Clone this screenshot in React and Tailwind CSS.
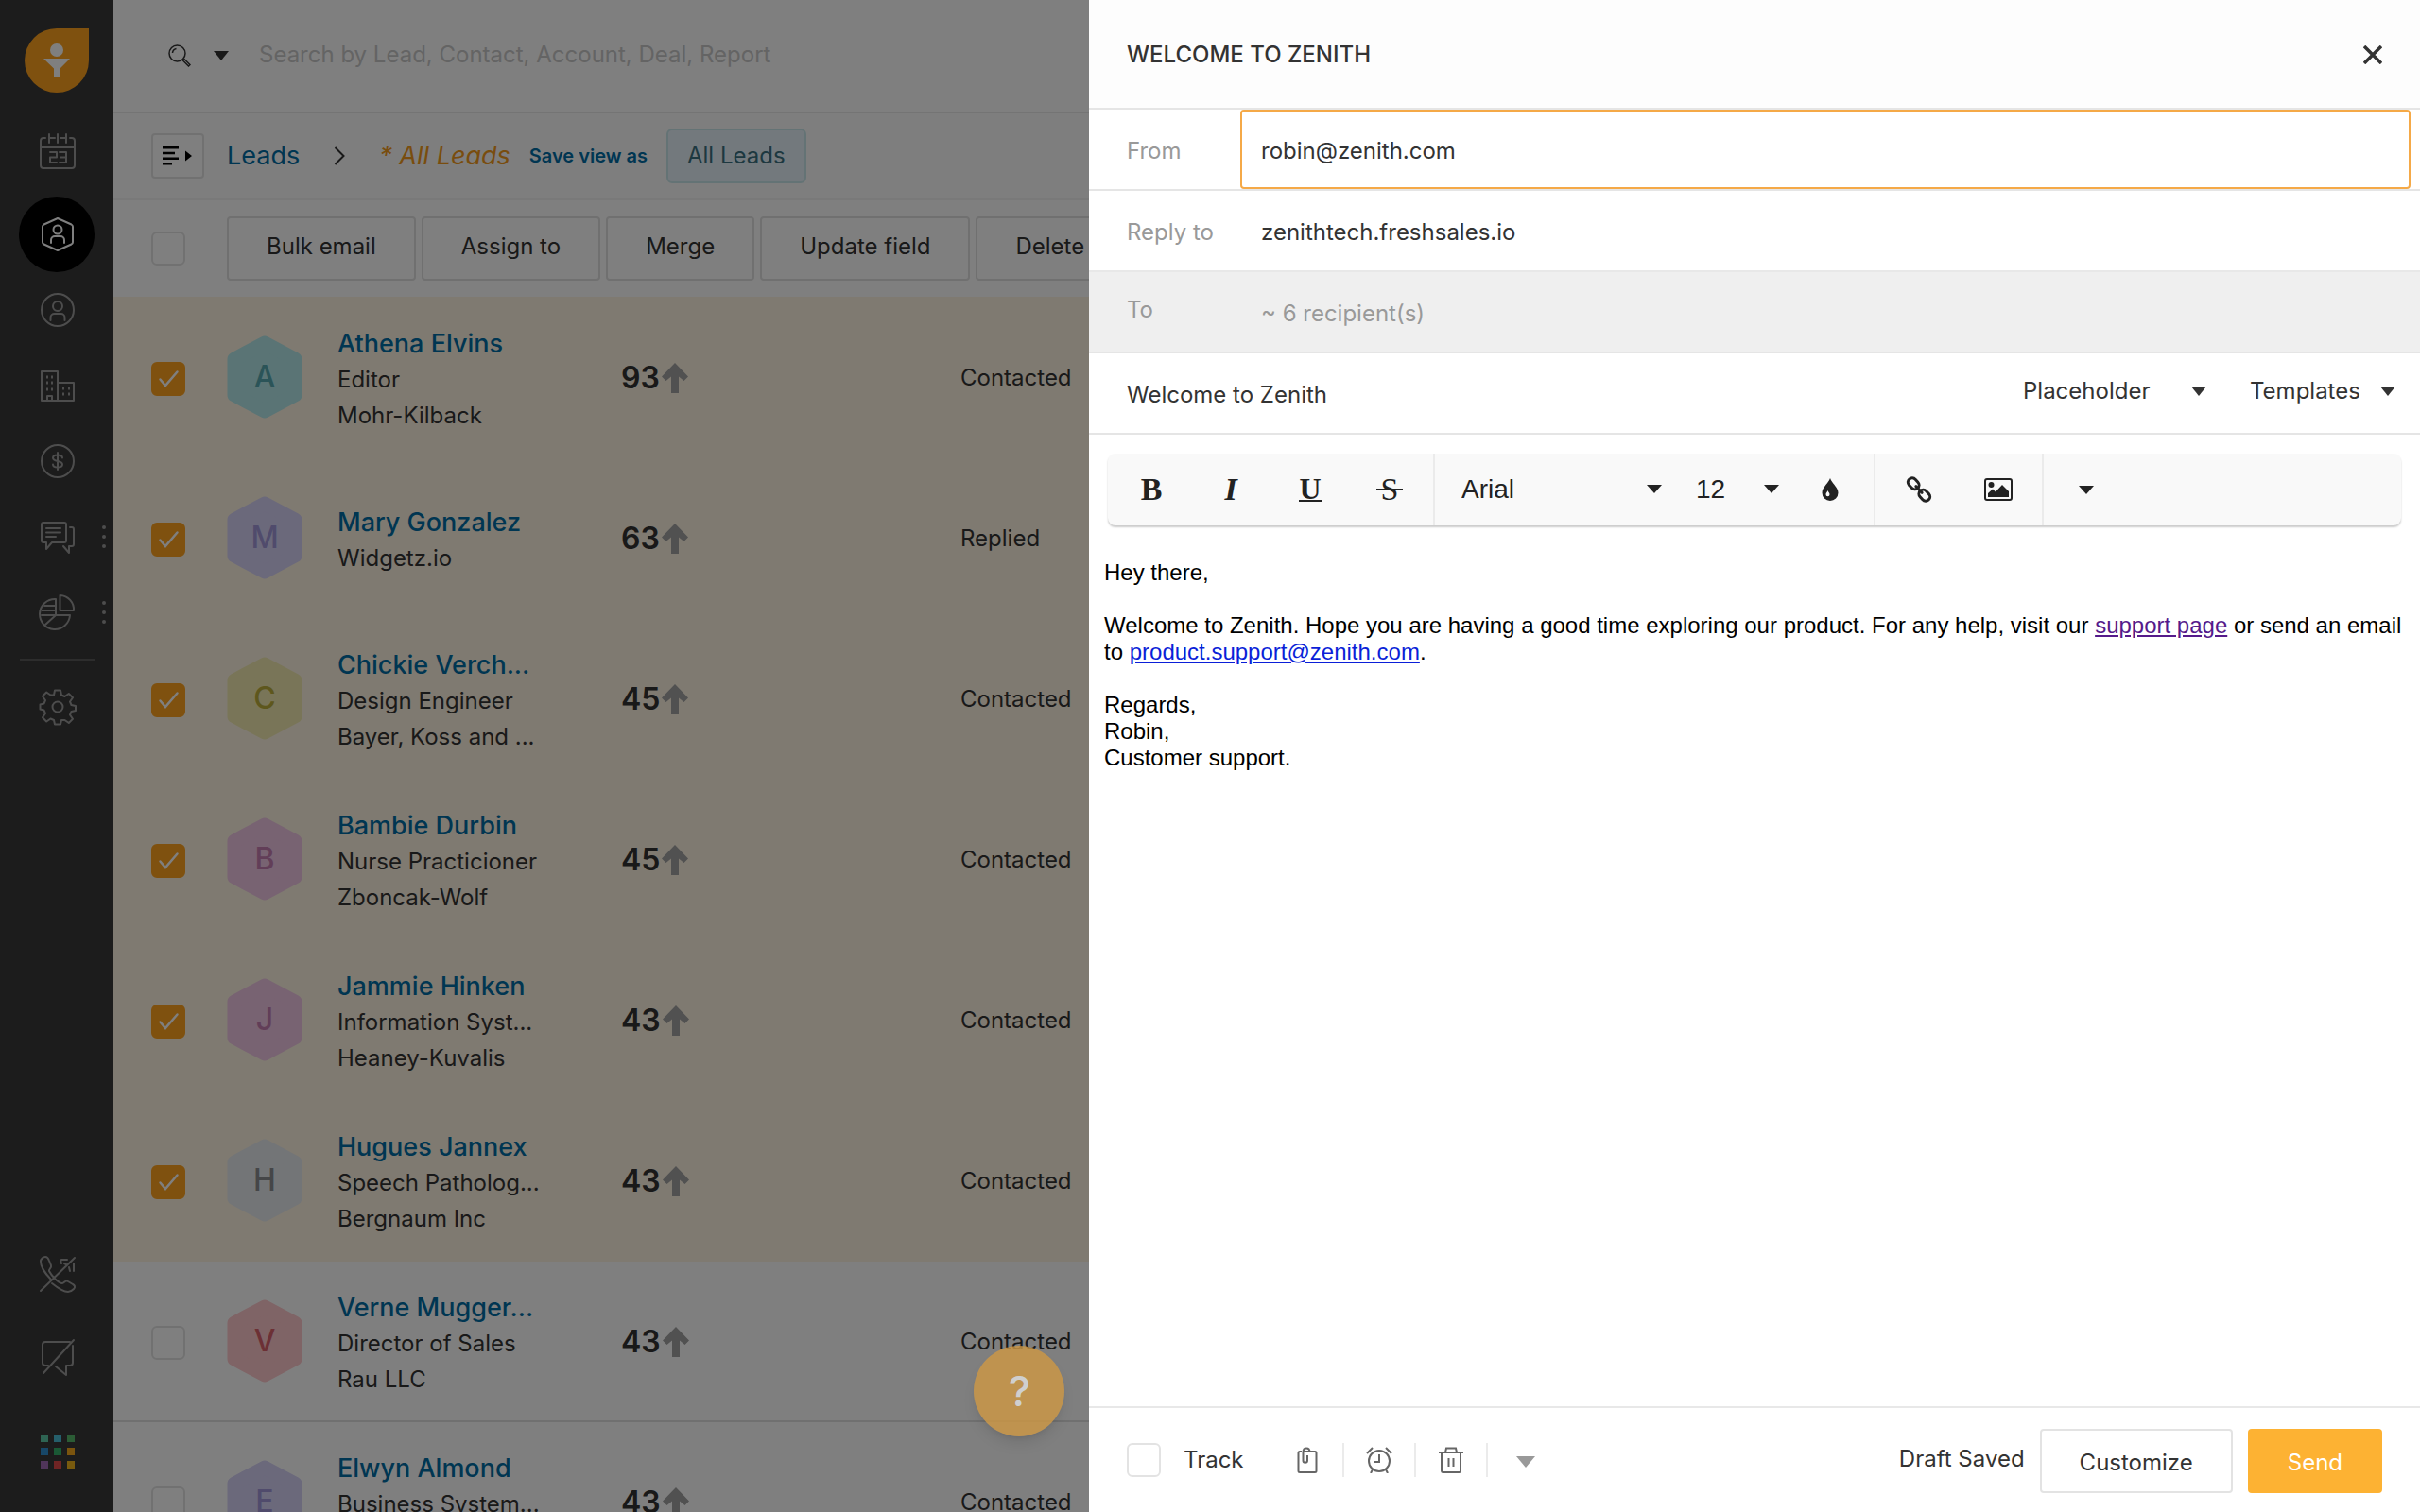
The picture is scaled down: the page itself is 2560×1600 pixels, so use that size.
import { useState } from "react";
import clsx from "clsx";

const leads = [
  { name: "Athena Elvins", title: "Editor", company: "Mohr-Kilback", score: 93, status: "Contacted", fill: "#b4e8ea", ink: "#56a8b0", selected: true },
  { name: "Mary Gonzalez", title: "", company: "Widgetz.io", score: 63, status: "Replied", fill: "#d6d2f6", ink: "#a096d8", selected: true },
  { name: "Chickie Verch...", title: "Design Engineer", company: "Bayer, Koss and ...", score: 45, status: "Contacted", fill: "#f2ebb0", ink: "#bcae3a", selected: true },
  { name: "Bambie Durbin", title: "Nurse Practicioner", company: "Zboncak-Wolf", score: 45, status: "Contacted", fill: "#f0c6e4", ink: "#c47cb0", selected: true },
  { name: "Jammie Hinken", title: "Information Syst...", company: "Heaney-Kuvalis", score: 43, status: "Contacted", fill: "#f0c6e4", ink: "#c47cb0", selected: true },
  { name: "Hugues Jannex", title: "Speech Patholog...", company: "Bergnaum Inc", score: 43, status: "Contacted", fill: "#e6eaee", ink: "#8a8d90", selected: true },
  { name: "Verne Mugger...", title: "Director of Sales", company: "Rau LLC", score: 43, status: "Contacted", fill: "#ffc8cc", ink: "#d8606a", selected: false },
  { name: "Elwyn Almond", title: "Business System...", company: "", score: 43, status: "Contacted", fill: "#d6d2f6", ink: "#a096d8", selected: false },
];

const bulkActions = ["Bulk email", "Assign to", "Merge", "Update field", "Delete"];

const appColors = [
  "bg-[#5cc9a7]", "bg-[#4bbfd6]", "bg-[#57b96b]",
  "bg-[#2f8fd0]", "bg-[#35b36a]", "bg-[#f5a81c]",
  "bg-[#a06ab4]", "bg-[#e04848]", "bg-[#f0b41c]",
];

function Caret({ className }) {
  return (
    <svg viewBox="0 0 16 10" className={clsx("pointer-events-none", className)} fill="currentColor" preserveAspectRatio="none" aria-hidden="true">
      <path d="M0 0h16L8 10z" />
    </svg>
  );
}

function Line({ children, className = "size-10" }) {
  return (
    <svg viewBox="0 0 40 40" className={className} fill="none" stroke="currentColor" strokeWidth="2" strokeLinejoin="round" strokeLinecap="round" aria-hidden="true">
      {children}
    </svg>
  );
}

function NavItem({ label, active, more, children }) {
  return (
    <div className="relative flex h-20 w-full items-center justify-center">
      <button
        aria-label={label}
        className={clsx(
          "flex size-20 items-center justify-center rounded-full pl-0.5",
          active ? "bg-black text-white" : "text-[#9a9a9a]"
        )}
      >
        {children}
      </button>
      {more && (
        <span className="absolute right-2 flex flex-col gap-1.5 text-[#9a9a9a]">
          <i className="size-1 rounded-full bg-current" />
          <i className="size-1 rounded-full bg-current" />
          <i className="size-1 rounded-full bg-current" />
        </span>
      )}
    </div>
  );
}

function Sidebar() {
  return (
    <nav className="flex w-[120px] shrink-0 flex-col items-center bg-[#383838] pt-[30px] pb-6">
      <a href="#home" aria-label="Home" className="mb-[22px] flex size-[68px] items-center justify-center rounded-full rounded-tr-lg bg-[#ffa21e]">
        <svg viewBox="0 0 28 36" className="h-9 w-7" fill="#fff" aria-hidden="true">
          <circle cx="14" cy="7" r="7" />
          <path d="M0 16h28L17.500 26.500V36h-6.500V26.500z" />
        </svg>
      </a>
      <NavItem label="Calendar">
        <Line>
          <path d="M7 6H5a3 3 0 0 0-3 3v26a3 3 0 0 0 3 3h30a3 3 0 0 0 3-3V9a3 3 0 0 0-3-3h-2M15 6h2M23 6h2M2 16h36M11 2v9M20 2v9M29 2v9M12 6h3M25 6h3" />
          <path d="M12 21h7v5.500h-7V32h7M22 21h7v11h-7M23 26.500h6" />
        </Line>
      </NavItem>
      <div className="h-2" />
      <NavItem label="Leads" active>
        <Line>
          <path d="M20 3 34.500 9.500a3 3 0 0 1 1.500 3v15a3 3 0 0 1-1.500 3L20 37 5.500 30.500a3 3 0 0 1-1.500-3v-15a3 3 0 0 1 1.500-3z" />
          <circle cx="20" cy="15" r="4.500" />
          <path d="M13 29v-3a4 4 0 0 1 4-4h6a4 4 0 0 1 4 4v3" />
        </Line>
      </NavItem>
      <NavItem label="Contacts">
        <Line>
          <circle cx="20" cy="20" r="17" />
          <circle cx="20" cy="16" r="5" />
          <path d="M12.500 31v-3a4 4 0 0 1 4-4h7a4 4 0 0 1 4 4v3" />
        </Line>
      </NavItem>
      <NavItem label="Accounts">
        <Line>
          <path d="M3 36V5h17v31M20 17h17v19H3M9 36v-5h5v5" />
          <path d="M8 11h2M13 11h2M8 17h2M13 17h2M8 24h2M13 24h2M25 23h2M31 23h2M25 29h2M31 29h2" strokeWidth="3" strokeLinecap="butt" />
        </Line>
      </NavItem>
      <NavItem label="Deals">
        <Line>
          <circle cx="20" cy="20" r="17" />
          <path d="M25 16.500c0-2-2.200-3-5-3s-5 1-5 3 2.200 3 5 3.500 5 1.500 5 3.500-2.200 3-5 3-5-1-5-3M20 11v18" />
        </Line>
      </NavItem>
      <NavItem label="Conversations" more>
        <Line>
          <path d="M5 5h22a2 2 0 0 1 2 2v17a2 2 0 0 1-2 2H14l-6 7v-7H5a2 2 0 0 1-2-2V7a2 2 0 0 1 2-2z" />
          <path d="M33 10h2a2 2 0 0 1 2 2v16a2 2 0 0 1-2 2h-3v7l-6-7M8 11h15M8 15.500h15M8 20h10" />
        </Line>
      </NavItem>
      <NavItem label="Reports" more>
        <Line>
          <path d="M18 6a16 16 0 1 0 15 17H18z" />
          <path d="M22.500 2v16H37A15 15 0 0 0 22.500 2zM6 13h12M3.500 18H18M3 23h15M18 23 7 33" />
        </Line>
      </NavItem>
      <div className="my-[9px] ml-0.5 h-0.5 w-20 shrink-0 bg-[#5a5a5a]" />
      <NavItem label="Settings">
        <Line>
          <circle cx="20" cy="20" r="5.500" />
          <path d="M17 2.500h6l1 5 3.500 1.500 4.300-3 4.200 4.200-3 4.300 1.500 3.500 4.500 1v5l-4.500 1-1.500 3.500 3 4.300-4.200 4.200-4.300-3L24 34l-1 4.500h-6L16 34l-3.500-1.500-4.300 3L4 31.300 7 27l-1.500-3.500-4-1v-5l4-1L7 13 4 8.700l4.200-4.200 4.300 3L16 7.500z" />
        </Line>
      </NavItem>
      <div className="grow" />
      <NavItem label="Phone off">
        <Line>
          <path d="M13 26C7 20 2 12 2 7c0-3 3-5 5-5s3 1 4 4l2 5c1 3-3 4-2 6s3 5 6 8 6 5 8 5 3-4 6-2l5 3c2 1 3 3 1 5s-4 3-6 3c-5 0-12-5-17-9M2 38 38 3" />
          <path d="M24 9c-1-2-1-3 0-4h6M33 17l-1-4M37 17V9M29 10l-2-1" />
        </Line>
      </NavItem>
      <div className="h-2" />
      <NavItem label="Chat off">
        <Line>
          <path d="M33 4H7a3 3 0 0 0-3 3v19a3 3 0 0 0 3 3h3M36 8v18a3 3 0 0 1-3 3h-4v10l-11-9M37 2 5 37" />
        </Line>
      </NavItem>
      <div className="h-5" />
      <NavItem label="Switch app">
        <span className="grid grid-cols-3 gap-1.5">
          {appColors.map((c) => (
            <i key={c} className={clsx("size-2", c)} />
          ))}
        </span>
      </NavItem>
    </nav>
  );
}

function Checkbox(props) {
  return (
    <span className="grid size-9 shrink-0">
      <input
        type="checkbox"
        className="peer col-start-1 row-start-1 size-9 appearance-none rounded-md border-2 border-[#e3e3e3] bg-white checked:border-[#ffa21e] checked:bg-[#ffa21e]"
        {...props}
      />
      <svg viewBox="0 0 36 36" className="pointer-events-none col-start-1 row-start-1 hidden size-9 peer-checked:block" fill="none" stroke="#fff" strokeWidth="2.500" strokeLinecap="round" aria-hidden="true">
        <path d="M9.500 18.500 15 25 27.500 10.500" />
      </svg>
    </span>
  );
}

function Avatar({ letter, fill, ink }) {
  return (
    <span className="grid h-[88px] w-20 place-items-center">
      <svg viewBox="0 0 80 88" className="col-start-1 row-start-1 h-[88px] w-20" aria-hidden="true">
        <path d="M40 8 72 25v38L40 80 8 63V25z" fill={fill} stroke={fill} strokeWidth="15" strokeLinejoin="round" />
      </svg>
      <span className="col-start-1 row-start-1 text-[32px] font-medium" style={{ color: ink }}>
        {letter}
      </span>
    </span>
  );
}

function LeadsPage() {
  const [picked, setPicked] = useState(leads.map((l) => l.selected));
  const toggle = (i) => setPicked(picked.map((p, n) => (n === i ? !p : p)));

  return (
    <main className="flex min-w-0 flex-1 flex-col bg-white text-[#333]">
      <header className="flex h-[120px] shrink-0 items-center border-b-2 border-[#e8e8e8] pl-[58px]">
        <button aria-label="Search in" className="flex items-center gap-6">
          <svg viewBox="0 0 24 24" className="size-6" fill="none" stroke="currentColor" strokeWidth="1.500" aria-hidden="true">
            <circle cx="9.500" cy="9.500" r="8.500" />
            <path d="M4.500 9a5 5 0 0 1 4-4.500M15.500 17l1.500-1.500 6 6-1.500 1.500z" />
          </svg>
          <Caret className="h-2.5 w-4" />
        </button>
        <input
          type="search"
          aria-label="Search"
          placeholder="Search by Lead, Contact, Account, Deal, Report"
          className="ml-8 w-[600px] bg-transparent pb-0.5 text-2xl placeholder:text-[#c8c8c8] focus:outline-none"
        />
      </header>

      <div className="flex h-[92px] shrink-0 items-center border-b-2 border-[#f2f2f2] bg-[#fdfdfd] pl-10">
        <button aria-label="Show views" className="flex h-12 w-14 items-center justify-center rounded-sm border-2 border-[#e3e3e3] bg-white text-black">
          <svg viewBox="0 0 32 20" className="h-5 w-8" fill="currentColor" aria-hidden="true">
            <path d="M0 0h17v2.500H0zM0 5.700h13v2.500H0zM0 11.400h17v2.500H0zM0 17.100h10v2.500H0zM24 4.500 31 10l-7 5.500z" />
          </svg>
        </button>
        <a href="#leads" className="ml-6 text-[27px] text-[#006ca4]">Leads</a>
        <svg viewBox="0 0 12 20" className="ml-9 h-5 w-3" fill="none" stroke="currentColor" strokeWidth="2" aria-hidden="true">
          <path d="m1.500 1 9 9-9 9" />
        </svg>
        <span className="ml-9 text-[27px] text-[#f29a1c] italic">* All Leads</span>
        <button className="ml-5 text-xl font-semibold text-[#006ca4]">Save view as</button>
        <button className="ml-5 h-[58px] rounded-md border-2 border-[#c9e6ea] bg-[#e7f3fb] px-5 text-2xl text-[#3a7080]">All Leads</button>
      </div>

      <div className="flex h-[102px] shrink-0 items-center pl-10">
        <Checkbox aria-label="Select all" />
        <div className="ml-11 flex gap-1.5">
          {bulkActions.map((a) => (
            <button key={a} className="h-[68px] rounded-sm border-2 border-[#e0e0e0] bg-white px-10 pb-1 text-2xl whitespace-nowrap">
              {a}
            </button>
          ))}
        </div>
      </div>

      <table className="w-full table-fixed">
        <colgroup>
          <col className="w-[120px]" />
          <col className="w-[117px]" />
          <col className="w-[300px]" />
          <col className="w-[359px]" />
          <col />
        </colgroup>
        <tbody>
          {leads.map((l, i) => (
            <tr key={l.name} className={clsx("h-[170px] border-b-2", picked[i] ? "border-[#fef4e2] bg-[#fef4e2]" : "border-[#e0e0e0] bg-white")}>
              <td className="pt-1 pl-10">
                <Checkbox aria-label={`Select ${l.name}`} checked={picked[i]} onChange={() => toggle(i)} />
              </td>
              <td>
                <Avatar letter={l.name[0]} fill={l.fill} ink={l.ink} />
              </td>
              <td className="pt-1.5 text-2xl leading-[38px] whitespace-nowrap">
                <a href="#lead" className="block text-[27px] leading-[38px] font-medium text-[#006ca4]">{l.name}</a>
                {l.title && <div>{l.title}</div>}
                <div className="h-[38px]">{l.company}</div>
              </td>
              <td className="pt-0.5">
                <span className="flex items-center gap-0.5 text-[32px] font-semibold">
                  {l.score}
                  <svg viewBox="0 0 28 32" className="h-8 w-7" fill="#a2a2a2" aria-hidden="true">
                    <path d="M14 0 28 14.500l-4.500 4.500-5.500-4.500V32h-8V14.500L4.500 19 0 14.500z" />
                  </svg>
                </span>
              </td>
              <td className="pt-0.5 text-2xl">{l.status}</td>
            </tr>
          ))}
        </tbody>
      </table>
    </main>
  );
}

function Picker({ label, value, options, className, caret }) {
  return (
    <span className={clsx("grid items-center", className)}>
      <select aria-label={label} defaultValue={value} className="col-start-1 row-start-1 w-full appearance-none bg-transparent focus:outline-none">
        {options.map((o) => (
          <option key={o}>{o}</option>
        ))}
      </select>
      <Caret className={clsx("col-start-1 row-start-1 justify-self-end", caret)} />
    </span>
  );
}

function ToolButton({ label, children }) {
  return (
    <button aria-label={label} className="flex w-[84px] items-center justify-center font-['Liberation_Serif',serif] text-[34px] leading-9">
      {children}
    </button>
  );
}

function EditorToolbar() {
  return (
    <div className="mx-5 mt-5 flex h-[76px] shrink-0 rounded-lg bg-[#f9f9f9] text-[#222] shadow-[0_2px_2px_#ccc]">
      <div className="flex border-r-2 border-[#ebebeb] px-1">
        <ToolButton label="Bold"><b>B</b></ToolButton>
        <ToolButton label="Italic"><b className="italic">I</b></ToolButton>
        <ToolButton label="Underline"><span className="border-b-2 border-current text-[32px] leading-6 font-bold">U</span></ToolButton>
        <ToolButton label="Strikethrough">
          <span className="grid items-center justify-items-center">
            <span className="col-start-1 row-start-1">S</span>
            <i className="col-start-1 row-start-1 h-0.5 w-7 bg-current" />
          </span>
        </ToolButton>
      </div>
      <div className="flex items-center border-r-2 border-[#ebebeb] pl-7 font-['Liberation_Sans',sans-serif] text-[28px]">
        <Picker label="Font" value="Arial" options={["Arial", "Georgia", "Verdana"]} className="w-[212px]" caret="h-[9px] w-4" />
        <Picker label="Font size" value="12" options={["10", "12", "14"]} className="ml-9 w-[88px]" caret="h-[9px] w-4" />
        <button aria-label="Text color" className="flex w-[100px] justify-center pl-2">
          <svg viewBox="0 0 18 24" className="h-6 w-[18px]" fill="currentColor" fillRule="evenodd" aria-hidden="true">
            <path d="M9 0c1.500 5 8.500 9.500 8.500 15.500a8.500 8.500 0 0 1-17 0C.5 9.500 7.500 5 9 0zM6.500 13c-.7 1.700-2 2.600-2 4.200a2 2 0 0 0 4 0c0-1.600-1.400-2.500-2-4.200z" />
          </svg>
        </button>
      </div>
      <div className="flex border-r-2 border-[#ebebeb] px-1">
        <ToolButton label="Insert link">
          <svg viewBox="0 0 28 28" className="size-7" fill="none" stroke="currentColor" strokeWidth="3" aria-hidden="true">
            <g transform="rotate(47 14 14)">
              <rect x="-1" y="9.500" width="13" height="9" rx="4.500" />
              <rect x="16" y="9.500" width="13" height="9" rx="4.500" />
              <path d="M9.500 14h9" strokeLinecap="round" />
            </g>
          </svg>
        </ToolButton>
        <ToolButton label="Insert image">
          <svg viewBox="0 0 30 24" className="h-6 w-[30px]" fill="currentColor" aria-hidden="true">
            <rect x="1" y="1" width="28" height="22" rx="2" fill="none" stroke="currentColor" strokeWidth="2" />
            <circle cx="7.500" cy="7" r="3" />
            <path d="M4 20v-4l5-4.500 3 3L19 7l7 7v6z" />
          </svg>
        </ToolButton>
      </div>
      <button aria-label="More formatting" className="px-[37px]">
        <Caret className="h-[9px] w-4" />
      </button>
    </div>
  );
}

function EmailPanel() {
  return (
    <section aria-label="Compose email" className="absolute inset-y-0 right-0 flex w-[55%] flex-col bg-white text-2xl text-[#333]">
      <header className="flex h-[116px] shrink-0 items-center justify-between border-b-2 border-[#e5e5e5] bg-[#fdfdfd] px-10 pt-0.5">
        <h1 className="font-medium">WELCOME TO ZENITH</h1>
        <button aria-label="Close">
          <svg viewBox="0 0 20 20" className="size-5" stroke="currentColor" strokeWidth="3.500" aria-hidden="true">
            <path d="m1 1 18 18M19 1 1 19" />
          </svg>
        </button>
      </header>

      <div className="flex h-[86px] shrink-0 border-b-2 border-[#e5e5e5] pr-2.5 pl-10">
        <label htmlFor="from" className="flex w-[120px] items-center pt-1 text-[#999]">From</label>
        <input id="from" defaultValue="robin@zenith.com" className="min-w-0 flex-1 rounded-sm border-2 border-[#f5a947] px-5 pt-1 focus:outline-none" />
      </div>
      <div className="flex h-[86px] shrink-0 border-b-2 border-[#e8e8e8] pr-2.5 pl-10">
        <label htmlFor="reply" className="flex w-[120px] items-center pt-1 text-[#999]">Reply to</label>
        <input id="reply" defaultValue="zenithtech.freshsales.io" className="min-w-0 flex-1 px-[22px] pt-1 focus:outline-none" />
      </div>
      <div className="flex h-[86px] shrink-0 border-b-2 border-[#e5e5e5] bg-[#efefef] pr-2.5 pl-10 text-[#999]">
        <label htmlFor="to" className="flex w-[120px] items-center pb-1">To</label>
        <input id="to" readOnly defaultValue="~ 6 recipient(s)" className="min-w-0 flex-1 px-[22px] pt-1 focus:outline-none" />
      </div>
      <div className="flex h-[86px] shrink-0 items-center border-b-2 border-[#e5e5e5] pr-[26px] pl-10">
        <input aria-label="Subject" defaultValue="Welcome to Zenith" className="min-w-0 flex-1 pt-1 focus:outline-none" />
        <Picker label="Placeholder" value="Placeholder" options={["Placeholder", "First name", "Company"]} className="w-[194px] pb-1" caret="h-2.5 w-4" />
        <Picker label="Templates" value="Templates" options={["Templates", "Welcome", "Follow up"]} className="ml-[46px] w-[154px] pb-1" caret="h-2.5 w-4" />
      </div>

      <EditorToolbar />

      <div
        contentEditable
        suppressContentEditableWarning
        role="textbox"
        aria-label="Message"
        className="flex-1 space-y-7 pt-9 pr-3 pl-4 font-['Liberation_Sans',Arial,sans-serif] leading-7 text-black focus:outline-none"
      >
        <p>Hey there,</p>
        <p>
          Welcome to Zenith. Hope you are having a good time exploring our product. For any help, visit our{" "}
          <a href="#support" className="text-[#551a8b] underline">support page</a> or send an email to{" "}
          <a href="mailto:product.support@zenith.com" className="text-[#0b1fd8] underline">product.support@zenith.com</a>.
        </p>
        <p>
          Regards,
          <br />
          Robin,
          <br />
          Customer support.
        </p>
      </div>

      <footer className="flex h-[112px] shrink-0 items-center border-t-2 border-[#e8e8e8] px-10">
        <label className="flex items-center gap-6">
          <Checkbox />
          Track
        </label>
        <div className="ml-[30px] flex h-9 items-center divide-x-2 divide-[#ebebeb] text-[#666]">
          <button aria-label="Attach" className="flex h-9 w-[76px] items-center justify-center">
            <svg viewBox="0 0 28 28" className="size-7" fill="none" stroke="currentColor" strokeWidth="2" aria-hidden="true">
              <path d="M8 5H6a1.500 1.500 0 0 0-1.500 1.500v19A1.500 1.500 0 0 0 6 27h16a1.500 1.500 0 0 0 1.500-1.500v-19A1.500 1.500 0 0 0 22 5H10M9.500 12V5.500c0-5.500 7-5.500 7 0V6M9.500 11v3.500c0 3 4.500 3 4.500 0V9" />
            </svg>
          </button>
          <button aria-label="Schedule" className="flex h-9 w-[76px] items-center justify-center">
            <svg viewBox="0 0 28 28" className="size-7" fill="none" stroke="currentColor" strokeWidth="2" aria-hidden="true">
              <circle cx="14" cy="15" r="11" />
              <path d="M14 8v8H9M1 7l6-6M27 7l-6-6M7 24l-2 4M21 24l2 4" />
            </svg>
          </button>
          <button aria-label="Discard" className="flex h-9 w-[76px] items-center justify-center">
            <svg viewBox="0 0 28 28" className="size-7" fill="none" stroke="currentColor" strokeWidth="2" aria-hidden="true">
              <path d="M1 6h26M4 6v19.500A1.500 1.500 0 0 0 5.500 27h17a1.500 1.500 0 0 0 1.500-1.500V6M8 6l1-4.500h10L20 6M11.500 12v9M16.500 12v9" />
            </svg>
          </button>
          <button aria-label="More" className="flex h-9 w-20 items-center justify-center pt-1 text-[#999]">
            <Caret className="h-3 w-5" />
          </button>
        </div>
        <span className="ml-auto pb-0.5">Draft Saved</span>
        <button className="mt-0.5 ml-4 h-[68px] rounded-sm border-2 border-[#e3e3e3] bg-white px-10 pt-1">Customize</button>
        <button className="mt-0.5 ml-4 h-[68px] rounded-sm bg-[#fdb233] px-[42px] pt-1 text-white">Send</button>
      </footer>
    </section>
  );
}

export default function App() {
  return (
    <div className="relative flex h-screen overflow-hidden font-[Inter,sans-serif]">
      <Sidebar />
      <LeadsPage />
      <div className="absolute inset-0 bg-black/50" />
      <button
        aria-label="Help"
        className="absolute right-[56%] bottom-20 size-24 rounded-full bg-[#cf9944]/80 text-[44px] font-medium text-[#cfcfcf] shadow-lg"
      >
        ?
      </button>
      <EmailPanel />
    </div>
  );
}
